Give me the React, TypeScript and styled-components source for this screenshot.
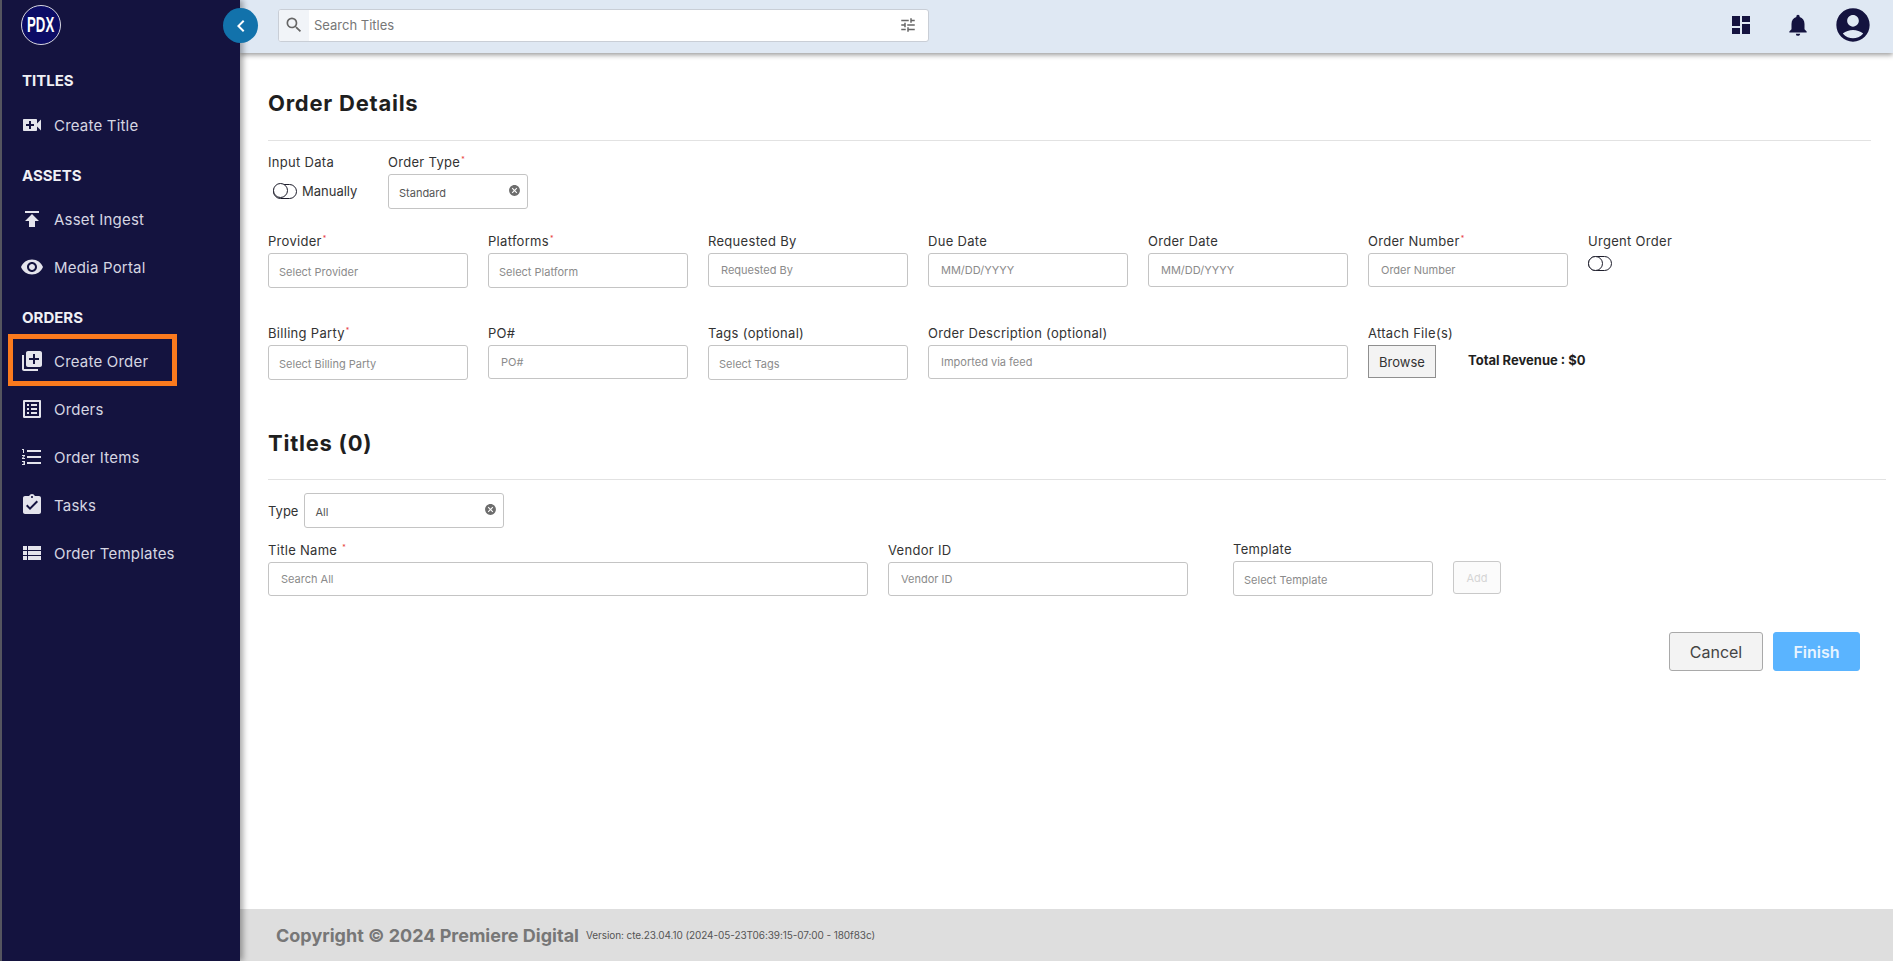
import * as React from 'react';
import styled, { createGlobalStyle } from 'styled-components';
import {
  MdAccountCircle,
  MdAssignmentTurnedIn,
  MdCancel,
  MdChevronLeft,
  MdDashboard,
  MdFormatListNumbered,
  MdLibraryAdd,
  MdListAlt,
  MdNotifications,
  MdPublish,
  MdSearch,
  MdTune,
  MdVideoCall,
  MdViewList,
  MdVisibility,
} from 'react-icons/md';

const navy = '#14133f';

const GlobalStyle = createGlobalStyle`
  html, body {
    margin: 0;
    padding: 0;
    background: #fff;
    font-family: Inter, "Open Sans", sans-serif;
    color: #333;
  }
  *, *::before, *::after { box-sizing: border-box; }
`;

const Page = styled.div`
  display: flex;
  width: 100%;
  height: 100vh;
  overflow: hidden;
`;

/* sidebar */
const Sidebar = styled.aside`
  position: relative;
  z-index: 3;
  flex: 0 0 240px;
  padding-top: 5px;
  background: ${navy};
  border-left: 2px solid #55555f;
  box-shadow: 3px 0 6px rgba(0, 0, 0, 0.35);
`;

const Logo = styled.div`
  display: flex;
  align-items: center;
  justify-content: center;
  width: 40px;
  height: 40px;
  margin-left: 19px;
  border-radius: 50%;
  border: 1px solid #d8d8e0;
  background: #0c0c66;
  color: #fff;
  font-family: "Liberation Sans", sans-serif;
  font-size: 22px;
  font-weight: 700;

  span {
    display: inline-block;
    transform: scaleX(0.6);
  }
`;

const Collapse = styled.button`
  position: absolute;
  top: 8px;
  right: -18px;
  display: flex;
  align-items: center;
  justify-content: center;
  width: 35px;
  height: 35px;
  padding: 0;
  border: 0;
  border-radius: 50%;
  background: #1272ab;
  color: #fff;
  font-size: 24px;
`;

const Section = styled.section<{ $top: number }>`
  margin-top: ${p => p.$top}px;
`;

const SectionTitle = styled.h3<{ $gap: number }>`
  margin: 0 0 ${p => p.$gap}px 20px;
  font-size: 15px;
  line-height: 20px;
  font-weight: 700;
  color: #f0f0f5;
`;

const NavItem = styled.div<{ $active?: boolean }>`
  position: relative;
  display: flex;
  align-items: center;
  gap: 10px;
  height: 48px;
  padding-left: 18px;
  font-size: 15px;
  letter-spacing: 0.2px;
  color: #d6d6e2;

  svg {
    flex: 0 0 24px;
    width: 24px;
    height: 24px;
    color: #e4e4ec;
  }

  ${p => p.$active && `
    &::after {
      content: "";
      position: absolute;
      top: -3px;
      left: 6px;
      width: 169px;
      height: 52px;
      border: 5px solid #fb7a1e;
    }
  `}
`;

/* main column */
const Main = styled.div`
  flex: 1;
  display: flex;
  flex-direction: column;
  min-width: 0;
`;

const Topbar = styled.header`
  position: relative;
  z-index: 2;
  flex: 0 0 53px;
  display: flex;
  align-items: center;
  padding: 0 20px 3px 38px;
  background: #dfe8f3;
  box-shadow: 0 2px 5px rgba(0, 0, 0, 0.4);
`;

const SearchBox = styled.div`
  display: flex;
  align-items: center;
  width: 651px;
  height: 33px;
  border: 1px solid #c9ced6;
  border-radius: 3px;
  background: #fff;
  overflow: hidden;
`;

const SearchAddon = styled.span`
  display: flex;
  align-items: center;
  justify-content: center;
  flex: 0 0 30px;
  height: 100%;
  background: #f1f4f8;
  color: #666;
  font-size: 20px;
`;

const SearchText = styled.span`
  flex: 1;
  padding-left: 5px;
  font-size: 13px;
  color: #777;
`;

const FilterIcon = styled.span`
  display: flex;
  margin-right: 11px;
  color: #666;
  font-size: 18px;
`;

const TopActions = styled.div`
  display: flex;
  align-items: center;
  margin-left: auto;
  color: ${navy};
`;

const TopIcon = styled.span<{ $size: number; $gap: number }>`
  display: flex;
  margin-left: ${p => p.$gap}px;
  font-size: ${p => p.$size}px;
`;

const Content = styled.main`
  flex: 1;
  padding: 36px 7px 0 28px;
`;

const Heading = styled.h2<{ $top?: number }>`
  margin: ${p => p.$top || 0}px 0 0;
  font-size: 22px;
  line-height: 28px;
  font-weight: 700;
  letter-spacing: 0.75px;
  color: #1f1f1f;
`;

const Divider = styled.hr<{ $inset?: number; $top: number }>`
  height: 1px;
  margin: ${p => p.$top}px ${p => p.$inset || 0}px 0 0;
  border: 0;
  background: #e2e2e2;
`;

const TopRow = styled.div`
  display: flex;
  margin-top: 13px;
`;

const FieldGrid = styled.div<{ $top: number }>`
  display: grid;
  grid-template-columns: repeat(7, 200px);
  column-gap: 20px;
  margin-top: ${p => p.$top}px;
`;

const Field = styled.div<{ $span?: number; $width?: number; $left?: number }>`
  display: flex;
  flex-direction: column;
  align-items: flex-start;
  ${p => p.$span && `grid-column: span ${p.$span};`}
  ${p => p.$width && `flex: 0 0 ${p.$width}px; width: ${p.$width}px;`}
  ${p => p.$left && `margin-left: ${p.$left}px;`}
`;

const Label = styled.label`
  height: 16px;
  margin-bottom: 4px;
  font-size: 13px;
  line-height: 16px;
  letter-spacing: 0.3px;
  color: #333;
  white-space: nowrap;
`;

const Required = styled.sup`
  margin-left: 1px;
  font-size: 7px;
  line-height: 0;
  color: #e8413f;
`;

const Toggle = styled.span`
  position: relative;
  display: inline-block;
  flex: none;
  width: 24px;
  height: 15px;
  border: 1.5px solid #1d1d2b;
  border-radius: 8px;

  &::before {
    content: "";
    position: absolute;
    top: -1.5px;
    left: -1.5px;
    width: 15px;
    height: 15px;
    border: 1.5px solid #1d1d2b;
    border-radius: 50%;
    background: #fff;
  }
`;

const UrgentToggle = styled(Toggle)`
  margin-top: 3px;
`;

const ToggleRow = styled.div`
  display: flex;
  align-items: center;
  gap: 5px;
  margin: 9px 0 0 5px;
  font-size: 13px;
  color: #333;
`;

const SelectBox = styled.div<{ $filled?: boolean; $width?: number }>`
  display: flex;
  align-items: center;
  justify-content: space-between;
  width: ${p => (p.$width ? `${p.$width}px` : '100%')};
  height: 35px;
  padding: 2px 6px 0 10px;
  border: 1px solid #c4c4c4;
  border-radius: 3px;
  font-size: 11px;
  color: ${p => (p.$filled ? '#555' : '#8b8b8b')};

  svg {
    margin-top: -4px;
    font-size: 13px;
    color: #6d6d6d;
  }
`;

const TextInput = styled.input`
  width: 100%;
  height: 34px;
  padding: 0 12px;
  border: 1px solid #c4c4c4;
  border-radius: 3px;
  font-family: inherit;
  font-size: 11px;
  outline: none;

  &::placeholder {
    color: #8b8b8b;
    opacity: 1;
  }
`;

const AttachRow = styled.div`
  display: flex;
  align-items: center;
  gap: 32px;
`;

const BrowseButton = styled.button`
  width: 68px;
  height: 33px;
  padding: 0;
  border: 1px solid #8f8f8f;
  background: #f3f3f3;
  font-family: inherit;
  font-size: 13px;
  color: #333;
`;

const Revenue = styled.span`
  margin-top: -3px;
  font-size: 13px;
  font-weight: 700;
  color: #1f1f1f;
  white-space: nowrap;
`;

const TypeRow = styled.div`
  display: flex;
  align-items: center;
  gap: 6px;
  margin-top: 13px;
  font-size: 13px;
`;

const TitleRow = styled.div`
  display: flex;
  align-items: flex-end;
  margin-top: 13px;
`;

const AddButton = styled.button`
  width: 48px;
  height: 33px;
  margin: 0 0 2px 20px;
  padding: 0;
  border: 1px solid #c9c9c9;
  border-radius: 3px;
  background: #fbfbfb;
  font-family: inherit;
  font-size: 11px;
  color: #d5d5d5;
`;

const Actions = styled.div`
  display: flex;
  justify-content: flex-end;
  gap: 10px;
  margin-top: 36px;
  padding-right: 26px;
`;

const ActionButton = styled.button<{ $primary?: boolean; $width: number }>`
  width: ${p => p.$width}px;
  height: 39px;
  padding: 0;
  border: 1px solid ${p => (p.$primary ? '#5ab4ff' : '#a9a9a9')};
  border-radius: 3px;
  background: ${p => (p.$primary ? '#5ab4ff' : '#f3f3f3')};
  font-family: inherit;
  font-size: 16px;
  font-weight: ${p => (p.$primary ? 600 : 400)};
  color: ${p => (p.$primary ? '#e8f4ff' : '#444')};
`;

const Footer = styled.footer`
  flex: 0 0 52px;
  display: flex;
  align-items: center;
  gap: 7px;
  padding-left: 36px;
  background: #dedede;
  color: #777;
`;

const Copyright = styled.span`
  font-size: 18px;
  font-weight: 700;
`;

const Version = styled.span`
  font-size: 10px;
  letter-spacing: -0.08px;
  color: #555;
`;

const Star = () => <Required>*</Required>;

export default function App() {
  return (
    <Page>
      <GlobalStyle />
      <Sidebar>
        <Logo><span>PDX</span></Logo>
        <Collapse aria-label="collapse"><MdChevronLeft /></Collapse>
        <Section $top={26}>
          <SectionTitle $gap={10}>TITLES</SectionTitle>
          <NavItem><MdVideoCall />Create Title</NavItem>
        </Section>
        <Section $top={17}>
          <SectionTitle $gap={9}>ASSETS</SectionTitle>
          <NavItem><MdPublish />Asset Ingest</NavItem>
          <NavItem><MdVisibility />Media Portal</NavItem>
        </Section>
        <Section $top={17}>
          <SectionTitle $gap={9}>ORDERS</SectionTitle>
          <NavItem $active><MdLibraryAdd />Create Order</NavItem>
          <NavItem><MdListAlt />Orders</NavItem>
          <NavItem><MdFormatListNumbered />Order Items</NavItem>
          <NavItem><MdAssignmentTurnedIn />Tasks</NavItem>
          <NavItem><MdViewList />Order Templates</NavItem>
        </Section>
      </Sidebar>
      <Main>
        <Topbar>
          <SearchBox>
            <SearchAddon><MdSearch /></SearchAddon>
            <SearchText>Search Titles</SearchText>
            <FilterIcon><MdTune /></FilterIcon>
          </SearchBox>
          <TopActions>
            <TopIcon $size={24} $gap={0}><MdDashboard /></TopIcon>
            <TopIcon $size={26} $gap={32}><MdNotifications /></TopIcon>
            <TopIcon $size={40} $gap={22}><MdAccountCircle /></TopIcon>
          </TopActions>
        </Topbar>
        <Content>
          <Heading>Order Details</Heading>
          <Divider $top={23} $inset={15} />
          <TopRow>
            <Field $width={120}>
              <Label>Input Data</Label>
              <ToggleRow><Toggle />Manually</ToggleRow>
            </Field>
            <Field $width={140}>
              <Label>Order Type<Star /></Label>
              <SelectBox $filled>Standard<MdCancel /></SelectBox>
            </Field>
          </TopRow>
          <FieldGrid $top={24}>
            <Field><Label>Provider<Star /></Label><SelectBox>Select Provider</SelectBox></Field>
            <Field><Label>Platforms<Star /></Label><SelectBox>Select Platform</SelectBox></Field>
            <Field><Label>Requested By</Label><TextInput placeholder="Requested By" /></Field>
            <Field><Label>Due Date</Label><TextInput placeholder="MM/DD/YYYY" /></Field>
            <Field><Label>Order Date</Label><TextInput placeholder="MM/DD/YYYY" /></Field>
            <Field><Label>Order Number<Star /></Label><TextInput placeholder="Order Number" /></Field>
            <Field><Label>Urgent Order</Label><UrgentToggle /></Field>
          </FieldGrid>
          <FieldGrid $top={37}>
            <Field><Label>Billing Party<Star /></Label><SelectBox>Select Billing Party</SelectBox></Field>
            <Field><Label>PO#</Label><TextInput placeholder="PO#" /></Field>
            <Field><Label>Tags (optional)</Label><SelectBox>Select Tags</SelectBox></Field>
            <Field $span={2}><Label>Order Description (optional)</Label><TextInput placeholder="Imported via feed" /></Field>
            <Field $span={2}>
              <Label>Attach File(s)</Label>
              <AttachRow>
                <BrowseButton>Browse</BrowseButton>
                <Revenue>Total Revenue : $0</Revenue>
              </AttachRow>
            </Field>
          </FieldGrid>
          <Heading $top={49}>Titles (0)</Heading>
          <Divider $top={22} />
          <TypeRow>
            Type
            <SelectBox $filled $width={200}>All<MdCancel /></SelectBox>
          </TypeRow>
          <TitleRow>
            <Field $width={600}><Label>Title Name <Star /></Label><TextInput placeholder="Search All" /></Field>
            <Field $width={300} $left={20}><Label>Vendor ID</Label><TextInput placeholder="Vendor ID" /></Field>
            <Field $width={200} $left={45}><Label>Template</Label><SelectBox>Select Template</SelectBox></Field>
            <AddButton disabled>Add</AddButton>
          </TitleRow>
          <Actions>
            <ActionButton $width={94}>Cancel</ActionButton>
            <ActionButton $primary $width={87}>Finish</ActionButton>
          </Actions>
        </Content>
        <Footer>
          <Copyright>Copyright © 2024 Premiere Digital</Copyright>
          <Version>Version: cte.23.04.10 (2024-05-23T06:39:15-07:00 - 180f83c)</Version>
        </Footer>
      </Main>
    </Page>
  );
}
